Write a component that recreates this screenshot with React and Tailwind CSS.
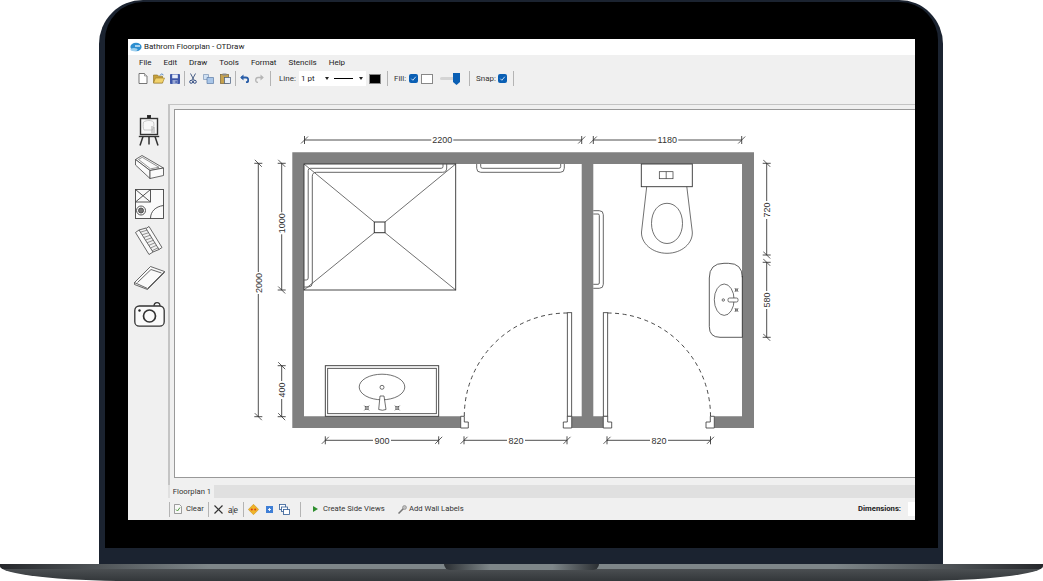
import React from 'react';

const uiFont = "font-['Roboto','Noto_Sans',sans-serif]";

const Sep = ({ className = 'h-[15px]' }) => <div className={`w-px bg-[#b4b4b4] ${className}`} />;

const Check = () => (
  <span className="flex h-[9px] w-[9px] items-center justify-center rounded-[2px] bg-[#0a5fb4]">
    <svg width="7" height="7" viewBox="0 0 8 8" fill="none" stroke="#dbe9f7" strokeWidth="1">
      <path d="M1.5 4.2 3.3 6 6.6 2" />
    </svg>
  </span>
);

const Caret = () => <span className="h-0 w-0 border-x-[2px] border-t-[3px] border-x-transparent border-t-[#222]" />;

const AppIcon = () => (
  <svg width="12" height="10" viewBox="0 0 12 10">
    <ellipse cx="6" cy="5" rx="5.6" ry="4.2" fill="#2e8fd0" />
    <ellipse cx="4" cy="7.6" rx="3.6" ry="1.6" fill="#9ed0ee" />
    <path d="M5 4h5" stroke="#fff" strokeWidth="1.2" />
  </svg>
);

// small 16-colour style toolbar glyphs
const NewIcon = () => (
  <svg width="10" height="11" viewBox="0 0 10 11">
    <path d="M1 .5h5.5L9 3v7.5H1z" fill="#fff" stroke="#555" strokeWidth=".8" />
    <path d="M6.5.5V3H9" fill="#ddd" stroke="#777" strokeWidth=".6" />
  </svg>
);
const OpenIcon = () => (
  <svg width="12" height="11" viewBox="0 0 12 11">
    <path d="M.5 2h4l1 1.2h4V10H.5z" fill="#c8a13c" stroke="#8b6f22" strokeWidth=".6" />
    <path d="M2.5 5h9L9.5 10H.5z" fill="#f2d36e" stroke="#9a7a26" strokeWidth=".6" />
    <path d="M7 2.5 8.5.8 10.5 2" fill="none" stroke="#3c78c0" strokeWidth=".8" />
  </svg>
);
const SaveIcon = () => (
  <svg width="10" height="10" viewBox="0 0 10 10">
    <rect width="10" height="10" rx=".8" fill="#3f57a8" />
    <rect x="2.2" y=".5" width="5.6" height="3.8" fill="#e6ecf8" />
    <rect x="2.5" y="6" width="5" height="4" fill="#9aa9d4" />
    <rect x="5.5" y="6.7" width="1.2" height="2.4" fill="#3f57a8" />
  </svg>
);
const CutIcon = () => (
  <svg width="8" height="11" viewBox="0 0 8 11" fill="none" stroke="#4a5f86" strokeWidth="1">
    <path d="M1.5 .5 5 7M6.5 .5 3 7" />
    <circle cx="2.2" cy="8.8" r="1.5" stroke="#2f4a80" />
    <circle cx="5.8" cy="8.8" r="1.5" stroke="#2f4a80" />
  </svg>
);
const CopyIcon = () => (
  <svg width="11" height="10" viewBox="0 0 11 10">
    <path d="M.5.5h5v5h-5z" fill="#cfe0f2" stroke="#7b93b4" strokeWidth=".7" />
    <path d="M4 3.5h6.500v6H4z" fill="#a9c6e8" stroke="#5b7ba6" strokeWidth=".7" />
  </svg>
);
const PasteIcon = () => (
  <svg width="11" height="11" viewBox="0 0 11 11">
    <rect x=".5" y="1.500" width="8" height="9" fill="#c6a24e" stroke="#7a6230" strokeWidth=".7" />
    <rect x="2.500" y=".5" width="4" height="2" fill="#8a8a8a" />
    <rect x="4.500" y="4.500" width="6" height="6" fill="#e8eff8" stroke="#44597a" strokeWidth=".7" />
  </svg>
);
const UndoIcon = ({ color = '#2a5ea8', flip = false, width = 1.8 }) => (
  <svg width="9" height="9" viewBox="0 0 9 9" fill="none" className={flip ? '-scale-x-100' : ''}>
    <path d="M1 3.500h4.500a2.500 2.500 0 0 1 .5 5" stroke={color} strokeWidth={width} />
    <path d="M3.500.5v6L.2 3.500z" fill={color} />
  </svg>
);

const Title = () => (
  <div className="flex h-4 shrink-0 items-center bg-white pl-[2px] text-[#222]">
    <AppIcon />
    <span className="ml-[2px] text-[8px]">Bathrom Floorplan - OTDraw</span>
  </div>
);

const MenuBar = () => (
  <div className="flex h-[15px] shrink-0 items-center gap-[12px] pl-[11px] text-[8px] text-[#222]">
    {['File', 'Edit', 'Draw', 'Tools', 'Format', 'Stencils', 'Help'].map((m) => (
      <span key={m}>{m}</span>
    ))}
  </div>
);

const TopToolbar = () => (
  <div className="flex h-[17px] shrink-0 items-center pl-[10px] text-[8px] text-[#333]">
    <div className="flex items-center gap-[5px]">
      <NewIcon />
      <OpenIcon />
      <SaveIcon />
    </div>
    <div className="mx-[4px]"><Sep /></div>
    <div className="flex items-center gap-[6px]">
      <CutIcon />
      <CopyIcon />
      <PasteIcon />
    </div>
    <div className="mx-[4px]"><Sep /></div>
    <div className="flex items-center gap-[6px]">
      <UndoIcon />
      <UndoIcon flip color="#b5b5b5" width={1.4} />
    </div>
    <div className="ml-[6px] mr-[8px]"><Sep /></div>
    <span className="w-[17px]">Line:</span>
    <div className="ml-[3px] flex h-[15px] w-[33px] items-center justify-between bg-white pl-[2px] pr-[3px] text-[#222]">
      <span>1 pt</span>
      <Caret />
    </div>
    <div className="flex h-[15px] w-[34px] items-center justify-between bg-white pl-[2px] pr-[3px]">
      <span className="h-px w-[19px] bg-black" />
      <Caret />
    </div>
    <span className="ml-[3px] h-[10px] w-[12px] border border-[#888] bg-black" />
    <div className="mx-[6px]"><Sep /></div>
    <span className="w-[13px]">Fill:</span>
    <div className="ml-[2px]"><Check /></div>
    <span className="ml-[3px] h-[10px] w-[12px] border border-[#888] bg-white" />
    <div className="relative ml-[7px] flex h-[14px] w-[20px] items-center">
      <span className="h-[3px] w-full rounded-sm bg-[#d4d4d4]" />
      <svg className="absolute right-0 top-[1px]" width="7" height="12" viewBox="0 0 7 12">
        <path d="M0 0h7v9l-3.500 3L0 9z" fill="#0a5fb4" />
      </svg>
    </div>
    <div className="ml-[9px] mr-[6px]"><Sep /></div>
    <span className="w-[20px]">Snap:</span>
    <div className="ml-[2px]"><Check /></div>
    <div className="ml-[6px]"><Sep /></div>
  </div>
);

const stairTreads = [0.1, 0.22, 0.34, 0.46, 0.58, 0.7, 0.82, 0.94]
  .map((t) => `M${4 + t * 14} ${4 + t * 22}L${11 + t * 13} ${2 + t * 21}`)
  .join('');

const SideTools = () => (
  <div className="flex w-10 shrink-0 flex-col items-center pl-[2px] pt-[11px]">
    <svg width="22" height="31" viewBox="0 0 22 31" fill="none" stroke="#333" strokeWidth="1">
      <rect x="9.500" y=".5" width="3" height="3" fill="#222" />
      <rect x="2.500" y="3.500" width="17" height="16" fill="#f7f7f7" strokeWidth="1.400" />
      <path d="M5.500 7c3-2 8-2 10 0 1 3 0 6-1 8H6c-1-2-1-5-.5-8z" stroke="#bbb" strokeWidth=".8" />
      <path d="M14 11v7M16 12v6" stroke="#a9a9a9" strokeWidth="1" />
      <path d="M.8 21.500h20.400" strokeWidth="1.400" />
      <path d="M5 21.500 2 30.500M17 21.500l3 9M11 21.500v8" strokeWidth="1.500" />
    </svg>
    <svg className="mt-[9px]" width="29" height="24" viewBox="0 0 29 24" fill="#fafafa" stroke="#444" strokeWidth=".8">
      <path d="M.5 4.500 7 .5 28.500 13 15 15.500z" />
      <path d="M.5 4.500V10L15 23.500V15.500z" />
      <path d="M15 15.500v8l13.500-3V13z" />
      <path d="M3.500 4.500 7.200 2.300 24 12.300 15.500 13.800z" stroke="#777" />
    </svg>
    <svg className="mt-[10px]" width="29" height="30" viewBox="0 0 29 30" fill="none" stroke="#444" strokeWidth=".9">
      <rect x=".5" y=".5" width="28" height="29" fill="#fafafa" />
      <path d="M.5 13h15V.5M.5.5l15 12.500M15.500.5.500 13" />
      <circle cx="6" cy="21.500" r="4.500" />
      <circle cx="6" cy="21.500" r="2.500" fill="#777" />
      <path d="M15.500 29.500c0-7 5-12 13-13" />
    </svg>
    <svg className="mt-[7px]" width="28" height="30" viewBox="0 0 28 30" fill="none" stroke="#444" strokeWidth=".8">
      <path d="M.5 6.500 14 28.500 18 26 4 4z" fill="#fafafa" />
      <path d="M14 .5 27 21.500 24 23.500 11 2.500z" fill="#fafafa" />
      <path d="M4 4 11 2M18 26l6-2.500" />
      <path d={stairTreads} strokeWidth=".7" stroke="#666" />
    </svg>
    <svg className="mt-[10px]" width="31" height="24" viewBox="0 0 31 24" fill="none" stroke="#444" strokeWidth=".8">
      <path d="M.5 16.500 16.500.5 30.500 5.500 13.500 22.500z" fill="#fafafa" />
      <path d="M3.500 16.500 17 3.500 27.500 7" />
      <path d="M.5 16.500v2l13 5 17-17v-1" />
    </svg>
    <svg className="mt-[12px]" width="31" height="25" viewBox="0 0 31 25" fill="#fafafa" stroke="#333">
      <path d="M20 4c0-4.500 6-4.500 6 0" strokeWidth="1.200" />
      <rect x=".8" y="4" width="29.400" height="20.200" rx="4.500" strokeWidth="1.300" />
      <circle cx="15.500" cy="14" r="6" strokeWidth="1.700" />
      <circle cx="5.500" cy="8.500" r="1.200" fill="#222" stroke="none" />
    </svg>
  </div>
);

// end marks of a dimension line
const Tick = ({ x, y }) => (
  <g stroke="#333" strokeWidth=".8">
    <path d={`M${x - 3.500} ${y + 3.500}L${x + 3.500} ${y - 3.500}`} />
  </g>
);

const DimH = ({ x1, x2, y, label, cx, gap = 11 }) => (
  <g>
    <path d={`M${x1} ${y}H${cx - gap}M${cx + gap} ${y}H${x2}M${x1} ${y - 4}V${y + 4}M${x2} ${y - 4}V${y + 4}`} stroke="#222" strokeWidth=".8" fill="none" />
    <Tick x={x1} y={y} />
    <Tick x={x2} y={y} />
    <text x={cx} y={y + 3.200} textAnchor="middle" fontSize="9" fill="#333" stroke="none" fontFamily="'Liberation Sans', sans-serif">{label}</text>
  </g>
);

const DimV = ({ x, y1, y2, label, cy, gap = 11 }) => (
  <g>
    <path d={`M${x} ${y1}V${cy - gap}M${x} ${cy + gap}V${y2}M${x - 4} ${y1}H${x + 4}M${x - 4} ${y2}H${x + 4}`} stroke="#222" strokeWidth=".8" fill="none" />
    <path d={`M${x - 3.500} ${y1 - 3.500}L${x + 3.500} ${y1 + 3.500}M${x - 3.500} ${y2 - 3.500}L${x + 3.500} ${y2 + 3.500}`} stroke="#333" strokeWidth=".8" />
    <text transform={`translate(${x + 3.200} ${cy}) rotate(-90)`} textAnchor="middle" fontSize="9" fill="#333" stroke="none" fontFamily="'Liberation Sans', sans-serif">{label}</text>
  </g>
);

const TapMark = ({ x, y, r = 2.500 }) => (
  <g stroke="#444" strokeWidth=".6" fill="none">
    <rect x={x - r / 1.700} y={y - r / 1.700} width={(r * 2) / 1.700} height={(r * 2) / 1.700} />
    <path d={`M${x - r} ${y - r}L${x + r} ${y + r}M${x + r} ${y - r}L${x - r} ${y + r}`} />
  </g>
);

// viewBox uses the screen coordinates of the page area
const Floorplan = () => (
  <svg className="block h-full w-full" viewBox="175 110 740 367" preserveAspectRatio="xMinYMin slice">
    {/* walls */}
    <path
      fill="#808080"
      d="M292.300 152.300H754V428H714.300V416.300H742V164H593.300V416.300H603.300V428H571.700V416.300H581.700V164H304V416.300H460.700V428H292.300Z"
    />
    <g fill="none" stroke="#333" strokeWidth=".9">
      {/* shower */}
      <rect x="304" y="164" width="151.700" height="126" fill="#fff" />
      <rect x="374.300" y="222" width="10.700" height="10.700" strokeWidth="1" />
      <path d="M304 164 374.300 222M455.700 164 385 222M304 290 374.300 232.700M455.700 290 385 232.700" strokeWidth=".7" />
      <path d="M443 164v2.500q0 1.800-1.800 1.800H310.500q-2.300 0-2.300 2.300V278q0 2-2 2H304" stroke="#555" />
      <path d="M446.700 164v4q0 4.300-4.300 4.300H316.500q-4.200 0-4.200 4.200V283q0 4-4 4H304" stroke="#555" />
      {/* rails */}
      <path d="M476.700 164v4.300q0 4 4 4H560.300q4 0 4-4V164M480.700 164v2.500q0 1.800 1.800 1.800H558.900q1.800 0 1.800-1.800V164" stroke="#555" />
      <path d="M593.300 210.700H599.300q4 0 4 4V284.300q0 4-4 4H593.300M593.300 214H598q1.300 0 1.300 1.300V283q0 1.300-1.300 1.300H593.300" stroke="#555" />
      {/* toilet */}
      <rect x="641.300" y="164" width="51" height="22.700" />
      <rect x="659.300" y="171.700" width="13.700" height="7" strokeWidth=".7" />
      <path d="M666.200 171.700V178.700" strokeWidth=".7" />
      <path d="M646.700 186.700 641.500 232C641 243 652 253.300 667 253.300S693 243 692.300 232L686.800 186.700" strokeWidth=".7" />
      <path d="M667 203.300C675.500 203.300 682.500 211 682.500 223.500 682.500 235 675.500 243.500 667 243.500S651.500 235 651.500 223.500C651.500 211 658.500 203.300 667 203.300Z" strokeWidth=".7" />
      {/* wall basin */}
      <path d="M742.300 337.300H720q-10.700 0-10.700-10.700V278q0-14.700 14.700-14.700h4.300q14 0 14 14" strokeWidth=".8" />
      <path d="M742.300 276v61.300" strokeWidth=".8" />
      <ellipse cx="724.200" cy="299.700" rx="9.900" ry="15.700" strokeWidth=".7" />
      <circle cx="723.300" cy="300" r="1.200" strokeWidth=".7" />
      <rect x="728" y="298" width="10" height="4" rx="1.500" fill="#fff" strokeWidth=".7" />
      {/* vanity */}
      <rect x="325.300" y="365.700" width="113.400" height="50.600" fill="#fff" />
      <rect x="327.700" y="368.300" width="108.600" height="45.400" strokeWidth=".8" />
      <ellipse cx="382" cy="387" rx="22.800" ry="12.800" strokeWidth=".7" />
      <circle cx="382" cy="387.300" r="2" strokeWidth=".7" />
      <path d="M380 396h4l2 13.500q-3.500 1.500-7.300 0z" fill="#fff" strokeWidth=".7" />
      {/* doors */}
      <path d="M464.300 416A103 103 0 0 1 567.300 313M607.700 313A103 103 0 0 1 710.500 416" strokeDasharray="4 3.500" strokeWidth=".9" />
      <rect x="567.300" y="312.700" width="4.400" height="103.600" fill="#fff" strokeWidth=".8" />
      <rect x="603.300" y="312.700" width="4.400" height="103.600" fill="#fff" strokeWidth=".8" />
      <g fill="#fff" strokeWidth=".8">
        <path d="M460.700 416.300H464.300V422H468.300V428H460.700Z" />
        <path d="M571.700 416.300V428H563.300V422H567.300V416.300Z" />
        <path d="M603.300 416.300H607.700V422H611.700V428H603.300Z" />
        <path d="M714.300 416.300V428H706V422H710.300V416.300Z" />
      </g>
    </g>
    <TapMark x={736.500} y={290} r={1.800} />
    <TapMark x={736.500} y={310} r={1.800} />
    <TapMark x={366.700} y={408} />
    <TapMark x={397.300} y={408} />
    {/* dimensions */}
    <DimH x1={304.500} x2={581.700} y={140} cx={442.300} label="2200" />
    <DimH x1={593.300} x2={741.700} y={140} cx={667.300} label="1180" />
    <DimH x1={325.300} x2={438.700} y={440.300} cx={382} gap={9} label="900" />
    <DimH x1={464} x2={567} y={440.300} cx={516} gap={9} label="820" />
    <DimH x1={607} x2={710.500} y={440.300} cx={659} gap={9} label="820" />
    <DimV x={258.300} y1={163.300} y2={416.700} cy={283} label="2000" />
    <DimV x={281.700} y1={163.300} y2={290} cy={223.300} label="1000" />
    <DimV x={281.700} y1={365.700} y2={416.700} cy={390} gap={9} label="400" />
    <DimV x={766.700} y1={163.300} y2={255} cy={210} gap={9} label="720" />
    <DimV x={766.700} y1={262.300} y2={337.300} cy={300} gap={9} label="580" />
  </svg>
);

const BottomToolbar = () => (
  <div className="flex h-[22px] shrink-0 items-center pl-[41px] text-[7.7px] text-[#333]">
    <Sep />
    <svg className="ml-[4px]" width="8" height="10" viewBox="0 0 8 10">
      <path d="M.5.5h5L7.500 2.500v7H.5z" fill="#f8f8f8" stroke="#777" strokeWidth=".7" />
      <path d="M2 5.500 3.500 7 6 3.500" fill="none" stroke="#4d9a3a" strokeWidth="1" />
    </svg>
    <span className="ml-[4px] w-[17px]">Clear</span>
    <div className="ml-[5px]"><Sep /></div>
    <svg className="ml-[5px]" width="9" height="9" viewBox="0 0 9 9" fill="none" stroke="#333" strokeWidth="1.200">
      <path d="M.5.5l8 8M8.500.5l-8 8" />
    </svg>
    <span className="ml-[5px] w-[10px] font-['Liberation_Serif',serif] text-[10px] tracking-[-0.5px]">a|e</span>
    <div className="ml-[5px]"><Sep /></div>
    <svg className="ml-[4px]" width="11" height="11" viewBox="0 0 11 11">
      <path d="M5.500.3 10.700 5.500 5.500 10.700.3 5.500z" fill="#f0b428" stroke="#c48a1a" strokeWidth=".5" />
      <circle cx="3.800" cy="5.500" r="1" fill="#d63a1e" />
      <circle cx="7.200" cy="5.500" r="1" fill="#d63a1e" />
    </svg>
    <svg className="ml-[7px]" width="7" height="7" viewBox="0 0 7 7">
      <rect width="7" height="7" fill="#3f7fd6" />
      <path d="M2 3.500h3M3.500 2v3" stroke="#fff" strokeWidth=".9" />
    </svg>
    <svg className="ml-[6px]" width="11" height="11" viewBox="0 0 11 11" fill="#fff" stroke="#2f5a94" strokeWidth=".8">
      <rect x=".5" y=".5" width="6" height="5" />
      <rect x="2.500" y="3" width="6" height="4.500" />
      <rect x="4.500" y="5.500" width="6" height="5" />
    </svg>
    <div className="ml-[10px]"><Sep /></div>
    <span className="ml-[12px] h-0 w-0 border-y-[3.500px] border-l-[5px] border-y-transparent border-l-[#2f8f2f]" />
    <span className="ml-[5px] w-[61px] whitespace-nowrap">Create Side Views</span>
    <svg className="ml-[14px]" width="9" height="9" viewBox="0 0 9 9">
      <path d="M.5 8.500 5.500 3.500" stroke="#777" strokeWidth="1.500" />
      <circle cx="6.500" cy="2.500" r="2" fill="#bdbdbd" stroke="#777" strokeWidth=".5" />
    </svg>
    <span className="ml-[2px]">Add Wall Labels</span>
    <span className="ml-auto font-bold text-[#222]">Dimensions:</span>
    <div className="ml-[7px] h-[14px] w-[7px] bg-white" />
  </div>
);

const AppWindow = () => (
  <div className={`flex h-[481px] w-[787px] flex-col overflow-hidden bg-[#f0f0f0] ${uiFont}`}>
    <Title />
    <MenuBar />
    <TopToolbar />
    <div className="h-[17px] shrink-0" />
    <div className="flex min-h-0 flex-1">
      <SideTools />
      <div className="flex min-w-0 flex-1 flex-col border-l-2 border-t border-[#c4c4c4] pb-[7px] pl-[4px] pt-[4px]">
        <div className="min-h-0 flex-1 overflow-hidden border-b border-l border-t border-[#999] bg-white">
          <Floorplan />
        </div>
      </div>
    </div>
    <div className="ml-[40px] flex h-[13px] shrink-0 bg-[#e0e0e0] pl-[2px]">
      <span className="flex w-[44px] items-center justify-center whitespace-nowrap bg-[#f0f0f0] text-[7.7px] text-[#333]">Floorplan 1</span>
    </div>
    <BottomToolbar />
  </div>
);

export default function App() {
  return (
    <div className="h-[581px] w-[1043px] overflow-hidden bg-white">
      <div className="ml-[99px] h-[564px] w-[844px] rounded-t-[44px] bg-[#1b2330] pb-[16px] pl-[6px] pr-[5px] pt-[2px]">
        <div className="h-[546px] rounded-t-[38px] bg-black pl-[23px] pt-[37px]">
          <AppWindow />
        </div>
      </div>
      <div className="relative h-[17px] overflow-hidden rounded-b-[130px_15px] bg-gradient-to-b from-[#55595c] to-[#33373a]">
        <div className="h-[5px] bg-[linear-gradient(90deg,#26282c,#7e8689_20%,#7e8689_80%,#26282c)]" />
        <div className="absolute left-[444px] top-0 h-[6px] w-[155px] rounded-b-[6px] bg-[linear-gradient(90deg,#2b2f33,#7e8689_30%,#7e8689_70%,#2b2f33)]" />
      </div>
    </div>
  );
}
